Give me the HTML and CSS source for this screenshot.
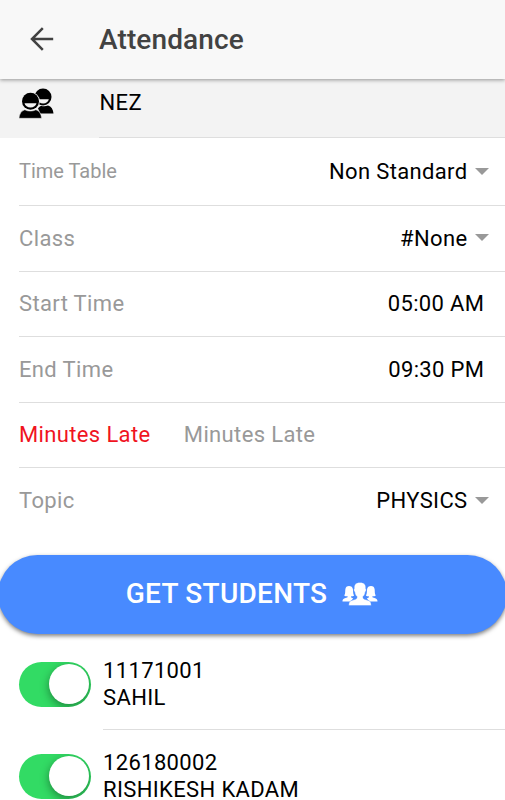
FILE: index.html
```html
<!DOCTYPE html>
<html lang="en">
<head>
<meta charset="utf-8">
<title>Attendance</title>
<link rel="stylesheet" href="styles.css">
</head>
<body>
<header class="toolbar">
  <svg class="back" viewBox="0 0 24 24"><path d="M23.200 12H2M12.800 1.200 2 12l10.800 10.800"/></svg>
  <h1 class="title">Attendance</h1>
</header>
<main>
  <section class="group">
    <svg class="group-icon" viewBox="0 0 36 32">
      <circle cx="24" cy="9.900" r="8.500"/>
      <path d="M18.500 12.300h11.300c-.5 2.500-2.700 4.200-5.600 4.200-3.200 0-5.200-1.700-5.700-4.200z" fill="#f3f3f3"/>
      <path d="M19 21.500c1-1.500 2-2.400 3.200-2.800 2 .8 4.500.7 6.800-.3 3.300 1 5.200 3.900 5.500 8H21.500z"/>
      <circle cx="11.500" cy="14.300" r="9.400" fill="#f3f3f3"/>
      <circle cx="11.500" cy="14.300" r="8.500"/>
      <path d="M5.500 16.200h12c-.5 2.500-3 4.200-6 4.200s-5.500-1.700-6-4.200z" fill="#f3f3f3"/>
      <path d="M0 31.300c.4-4.800 2.600-7.500 5.800-8.500 3.300 1.700 7.800 1.700 11.100 0 3.200 1 5.300 3.700 5.700 8.500z" stroke="#f3f3f3" stroke-width=".5"/>
    </svg>
    <div class="group-name">NEZ</div>
  </section>
  <section class="form">
    <div class="row row-first"><span class="label label-small">Time Table</span><span class="value">Non Standard</span><i class="caret"></i></div>
    <div class="row"><span class="label">Class</span><span class="value">#None</span><i class="caret"></i></div>
    <div class="row"><span class="label">Start Time</span><span class="value value-end">05:00 AM</span></div>
    <div class="row"><span class="label">End Time</span><span class="value value-end">09:30 PM</span></div>
    <div class="row"><span class="label label-red">Minutes Late</span><span class="placeholder">Minutes Late</span></div>
    <div class="row row-last"><span class="label">Topic</span><span class="value">PHYSICS</span><i class="caret"></i></div>
  </section>
  <button class="action" type="button">
    <span>GET STUDENTS</span>
    <svg class="people" viewBox="0 0 36 24" fill="#fff">
      <path d="M.5 19.500c0-2.300 1-3 4.800-4 .4-.4.400-.8.300-1.200-1.400.1-2.600-.2-3.400-.9 1.200-1.100.9-3.400 1.100-5.600C3.500 5 5 4 7 4s3.800 1 4 3.800c.2 2.200 0 4.500 1.100 5.600-.8.700-1.900 1-3 .9l.1 1.200 2 .9-2.800 3.100z"/>
      <path d="M35.500 19.500c0-2.300-1-3-4.800-4-.4-.4-.4-.8-.3-1.200 1.400.1 2.600-.2 3.400-.9-1.200-1.100-.9-3.400-1.100-5.600C32.500 5 31 4 29 4s-3.800 1-4 3.800c-.2 2.200 0 4.500-1.100 5.600.8.700 1.900 1 3 .9l-.1 1.200-2 .9 2.800 3.100z"/>
      <path d="M6.800 23.500c0-3.700 1-4.700 5-5.700 3-.8 3.300-1.300 3.200-3.200-1.400-1.100-2-2.800-2.200-4.700-1-.6-1.400-3-.5-3.500C11.800 2.500 14 .4 18 .4s6.200 2.100 5.700 6c.9.500.5 2.900-.5 3.500-.2 1.900-.8 3.600-2.200 4.700-.1 1.900.2 2.400 3.200 3.200 4 1 5 2 5 5.700z" stroke="#488aff" stroke-width=".4"/>
    </svg>
  </button>
  <section class="students">
    <div class="student"><span class="toggle"><span class="knob"></span></span><div class="info">11171001<br>SAHIL</div></div>
    <div class="student"><span class="toggle"><span class="knob"></span></span><div class="info">126180002<br>RISHIKESH KADAM</div></div>
  </section>
</main>
</body>
</html>
```
FILE: styles.css
```css
* { box-sizing: border-box; }
html, body { height: 100%; }
body {
  margin: 0;
  overflow: hidden;
  background: #fff;
  color: #000;
  font: 22px/27px Roboto, sans-serif;
  letter-spacing: .36px;
}
.toolbar {
  position: relative;
  display: flex;
  align-items: center;
  height: 79px;
  padding: 0 0 0 30px;
  background: #f8f8f8;
  box-shadow: 0 1px 4px rgba(0, 0, 0, .4);
}
.back { width: 24px; height: 24px; margin-bottom: 1px; fill: none; stroke: #424242; stroke-width: 2.5; }
.title { margin: 0 0 0 45px; font-size: 28px; font-weight: 500; line-height: 36px; letter-spacing: .13px; color: #424242; }
.group { display: flex; height: 59px; padding-left: 19px; background: #f3f3f3; }
.group-icon { width: 36px; height: 32px; margin-top: 8px; }
.group-name { flex: 1; margin-left: 44px; padding: 10px 0 0 .5px; border-bottom: 1px solid #dedede; }
.form { padding-left: 19px; }
.row { display: flex; align-items: center; height: 65.500px; border-bottom: 1px solid #dedede; }
.row-first { height: 68px; }
.row-last { border-bottom: 0; }
.label { color: #999; }
.label-small { font-size: 20px; letter-spacing: 0; }
.label-red { color: #f0141e; }
.placeholder { margin-left: 33.300px; color: #999; }
.value { margin-left: auto; }
.value-end { margin-right: 20.600px; }
.caret { margin: 0 16px 1px 7.500px; border: 7px solid transparent; border-top-color: #999; border-bottom: 0; }
.action {
  display: flex;
  align-items: center;
  justify-content: center;
  width: 509px;
  height: 79px;
  margin: 21px 0 0 -2.500px;
  padding: 0 0 1px;
  border: 0;
  border-radius: 40px;
  background: #488aff;
  box-shadow: 0 2px 4px rgba(0, 0, 0, .5);
  color: #fff;
  font: 500 28px/36px Roboto, sans-serif;
  letter-spacing: .27px;
}
.people { width: 36px; height: 24px; margin-left: 15px; }
.students { padding-top: 4px; }
.student { display: flex; height: 92px; padding-left: 19px; }
.toggle { width: 72px; height: 45px; margin-top: 24px; padding: 2px 2px 2px 30px; border-radius: 23px; background: #32db64; overflow: hidden; }
.knob { display: block; width: 40px; height: 40px; border-radius: 50%; background: #fff; box-shadow: 0 3px 10px rgba(0, 0, 0, .4); }
.info { flex: 1; margin-left: 12px; padding-top: 19px; border-bottom: 1px solid #dedede; }
```
